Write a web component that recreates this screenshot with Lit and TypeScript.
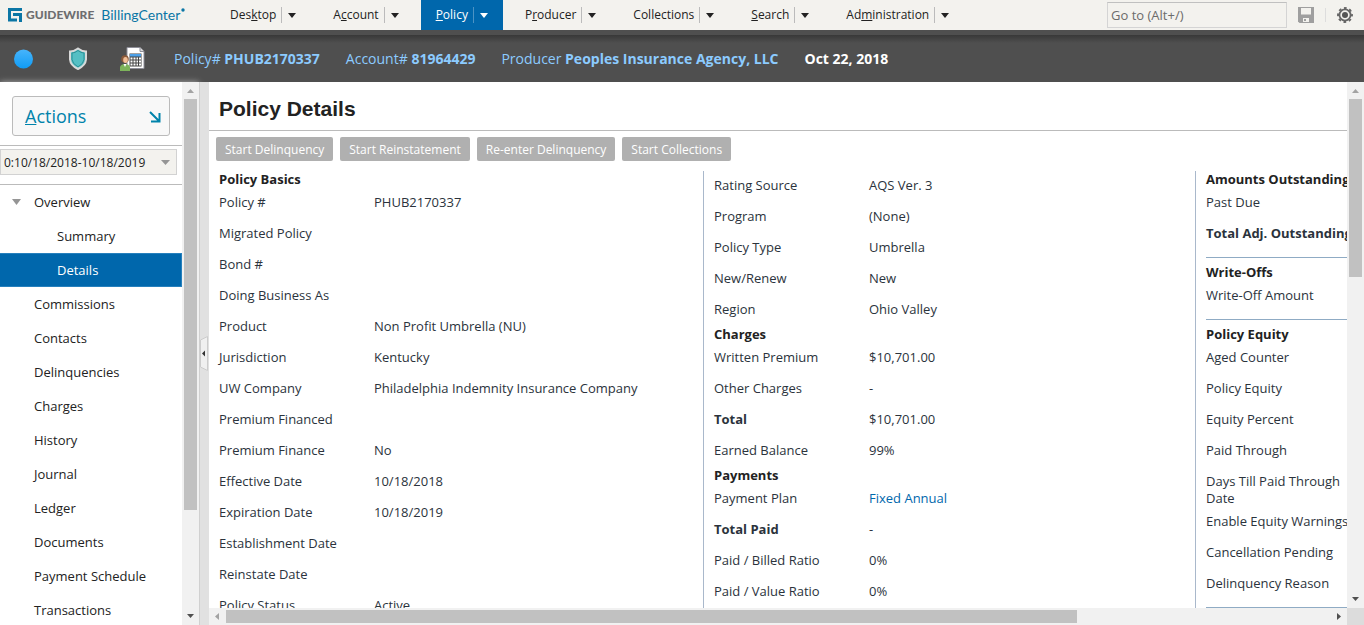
import { LitElement, html, css, nothing } from "lit";
import { customElement } from "lit/decorators.js";
import { classMap } from "lit/directives/class-map.js";

type Row = { label: string; value?: string; strong?: boolean; link?: boolean };
type Group = { title?: string; rows: Row[]; ruled?: boolean };

const MENUS: { pre: string; key: string; post: string; active?: boolean }[] = [
  { pre: "Des", key: "k", post: "top" },
  { pre: "A", key: "c", post: "count" },
  { pre: "", key: "P", post: "olicy", active: true },
  { pre: "P", key: "r", post: "oducer" },
  { pre: "Collections", key: "", post: "" },
  { pre: "", key: "S", post: "earch" },
  { pre: "Ad", key: "m", post: "inistration" },
];

const COLUMNS: Group[][] = [
  [
    {
      title: "Policy Basics",
      rows: [
        { label: "Policy #", value: "PHUB2170337" },
        { label: "Migrated Policy" },
        { label: "Bond #" },
        { label: "Doing Business As" },
        { label: "Product", value: "Non Profit Umbrella (NU)" },
        { label: "Jurisdiction", value: "Kentucky" },
        { label: "UW Company", value: "Philadelphia Indemnity Insurance Company" },
        { label: "Premium Financed" },
        { label: "Premium Finance", value: "No" },
        { label: "Effective Date", value: "10/18/2018" },
        { label: "Expiration Date", value: "10/18/2019" },
        { label: "Establishment Date" },
        { label: "Reinstate Date" },
        { label: "Policy Status", value: "Active" },
      ],
    },
  ],
  [
    {
      rows: [
        { label: "Rating Source", value: "AQS Ver. 3" },
        { label: "Program", value: "(None)" },
        { label: "Policy Type", value: "Umbrella" },
        { label: "New/Renew", value: "New" },
        { label: "Region", value: "Ohio Valley" },
      ],
    },
    {
      title: "Charges",
      rows: [
        { label: "Written Premium", value: "$10,701.00" },
        { label: "Other Charges", value: "-" },
        { label: "Total", value: "$10,701.00", strong: true },
        { label: "Earned Balance", value: "99%" },
      ],
    },
    {
      title: "Payments",
      rows: [
        { label: "Payment Plan", value: "Fixed Annual", link: true },
        { label: "Total Paid", value: "-", strong: true },
        { label: "Paid / Billed Ratio", value: "0%" },
        { label: "Paid / Value Ratio", value: "0%" },
      ],
    },
  ],
  [
    {
      title: "Amounts Outstanding",
      ruled: true,
      rows: [{ label: "Past Due" }, { label: "Total Adj. Outstanding", strong: true }],
    },
    { title: "Write-Offs", ruled: true, rows: [{ label: "Write-Off Amount" }] },
    {
      title: "Policy Equity",
      ruled: true,
      rows: [
        { label: "Aged Counter" },
        { label: "Policy Equity" },
        { label: "Equity Percent" },
        { label: "Paid Through" },
        { label: "Days Till Paid Through Date" },
        { label: "Enable Equity Warnings" },
        { label: "Cancellation Pending" },
        { label: "Delinquency Reason" },
      ],
    },
  ],
];

@customElement("gw-scrollbar")
class GwScrollbar extends LitElement {
  static properties = {
    horizontal: { type: Boolean, reflect: true },
    before: { type: Number },
    size: { type: Number },
    after: { type: Number },
  };
  declare horizontal: boolean;
  declare before: number;
  declare size: number;
  declare after: number;

  static styles = css`
    :host { display: flex; flex-direction: column; flex: none; width: 17px; background: #f1f1f1; }
    :host([horizontal]) { flex-direction: row; width: auto; height: 17px; }
    .arrow { flex: none; width: 17px; height: 17px; display: block; }
    .track { flex: 1; min-width: 0; min-height: 0; display: flex; flex-direction: column; align-items: center; }
    :host([horizontal]) .track { flex-direction: row; }
    .thumb { background: #c1c1c1; width: 13px; }
    :host([horizontal]) .thumb { width: auto; height: 13px; }
  `;

  render() {
    const h = this.horizontal;
    return html`
      <svg class="arrow" viewBox="0 0 17 17"><path fill="#a3a3a3" d=${h ? "M10 5v7L6 8.500z" : "M5 11h7L8.500 7z"} /></svg>
      <div class="track">
        <div style="flex:${this.before} 0 0"></div>
        <div class="thumb" style="flex:${this.size} 0 0"></div>
        <div style="flex:${this.after} 0 0"></div>
      </div>
      <svg class="arrow" viewBox="0 0 17 17"><path fill="#505050" d=${h ? "M7 5v7l4-3.500z" : "M5 6h7l-3.500 4z"} /></svg>
    `;
  }
}

@customElement("gw-topbar")
class GwTopbar extends LitElement {
  static styles = css`
    :host { display: flex; align-items: stretch; flex: none; height: 30px; background: #f3f2ee; color: #222; }
    .brand { display: flex; align-items: center; flex: none; width: 207px; padding-left: 8px; box-sizing: border-box; }
    .mark { width: 14px; height: 14px; flex: none; margin-right: 4px; }
    .maker { font: 900 12px/16px Lato, sans-serif; color: #6d6e70; }
    .product { font: 14px/18px Lato, "Open Sans", sans-serif; color: #0b76a5; margin-left: 7px; }
    .reg { width: 4px; height: 4px; align-self: flex-start; margin: 8px 0 0 1px; }
    nav { display: flex; gap: 7px; flex: 1; padding-left: 8px; }
    .menu {
      display: flex; align-items: center; border: 0; background: none; padding: 0 15px;
      font: inherit; font-size: 12px; line-height: 16px; color: inherit; white-space: nowrap;
    }
    .menu.active { background: #0067ac; color: #fff; }
    .sep { width: 1px; height: 16px; background: #bbb; margin: 0 6px 0 5px; }
    .active .sep { background: #4c93c4; }
    .caret { width: 8px; height: 5px; }
    .search {
      width: 180px; height: 26px; box-sizing: border-box; align-self: center; border: 1px solid #d4d4d4; border-top-color: #c0c0c0;
      background: #f3f2ee; padding: 0 3px; font: inherit; font-size: 13px; color: #555;
    }
    .search::placeholder { color: #6b6b6b; opacity: 1; }
    .tools { display: flex; align-items: center; padding: 0 11px; }
    .tool { border: 0; padding: 0; background: none; display: block; width: 16px; height: 16px; }
    .tool svg { display: block; width: 16px; height: 16px; }
    .line { width: 1px; height: 14px; background: #ddd; margin: 0 11px; }
  `;

  render() {
    return html`
      <div class="brand">
        <svg class="mark" viewBox="0 0 14 14">
          <path d="M14 1.500H1.500V12H9" fill="none" stroke="#0b76a5" stroke-width="3" />
          <path d="M5 6.500H12.500V14" fill="none" stroke="#0b76a5" stroke-width="3" />
        </svg>
        <span class="maker">GUIDEWIRE</span><span class="product">BillingCenter</span>
        <svg class="reg" viewBox="0 0 4 4"><circle cx="2" cy="2" r="1.700" fill="#0b76a5" /></svg>
      </div>
      <nav>
        ${MENUS.map(
          (m) => html`<button class=${classMap({ menu: true, active: !!m.active })}>
            <span>${m.pre}${m.key ? html`<u>${m.key}</u>` : nothing}${m.post}</span>
            <span class="sep"></span>
            <svg class="caret" viewBox="0 0 8 5"><path d="M0 0h8L4 5z" fill="currentColor" /></svg>
          </button>`,
        )}
      </nav>
      <input class="search" aria-label="Go to" placeholder="Go to (Alt+/)" />
      <div class="tools">
        <button class="tool" aria-label="Save">
          <svg viewBox="0 0 16 16">
            <path d="M0 0h16v16H1.500L0 14.500z" fill="#9f9f9f" />
            <path d="M3 1h10v6.500H3zM5 11h6v4H5z" fill="#f3f2ee" />
            <path d="M6 12h2v2H6z" fill="#9f9f9f" />
          </svg>
        </button>
        <span class="line"></span>
        <button class="tool" aria-label="Settings">
          <svg viewBox="0 0 16 16" fill="none" stroke="#666">
            <circle cx="8" cy="8" r="5.600" stroke-width="1.800" />
            <circle cx="8" cy="8" r="7" stroke-width="1.900" stroke-dasharray="2.750 2.750" stroke-dashoffset="1.300" />
            <circle cx="8" cy="8" r="3" fill="#555" stroke="none" />
          </svg>
        </button>
      </div>
    `;
  }
}

@customElement("gw-infobar")
class GwInfobar extends LitElement {
  static styles = css`
    :host {
      display: flex; align-items: center; flex: none; height: 52px; box-sizing: border-box; border-top: 5px solid #4f4f4f;
      background: linear-gradient(#383838, #4f4f4f 8px); color: #fff; font-size: 14px; line-height: 20px; white-space: nowrap;
    }
    .icons { display: flex; align-items: center; width: 174px; flex: none; padding-left: 13px; box-sizing: border-box; }
    .dot { width: 20px; height: 20px; margin-right: 35px; }
    .shield { width: 20px; height: 24px; margin-right: 32px; }
    .acct { width: 25px; height: 24px; }
    .facts { display: flex; gap: 26px; }
    a { color: #8ccbff; text-decoration: none; }
  `;

  render() {
    return html`
      <div class="icons">
        <svg class="dot" viewBox="0 0 20 20">
          <defs><linearGradient id="b" x2="0" y2="1"><stop stop-color="#47b4fb" /><stop offset="1" stop-color="#109cf5" /></linearGradient></defs>
          <circle cx="10.500" cy="10" r="9.500" fill="url(#b)" />
        </svg>
        <svg class="shield" viewBox="0 0 20 24">
          <path d="M10 1.500Q6 4.500 2 4.500v8Q2.500 18.500 10 22 17.500 18.500 18 12.500v-8Q14 4.500 10 1.500z" fill="#55bfc4" stroke="#d9d9d9" stroke-width="2" />
          <path d="M10 3.500Q7 6 4 6v6.500Q4.500 17 10 19.800 15.500 17 16 12.500V6Q13 6 10 3.500z" fill="none" stroke="#2f9097" stroke-width="1" />
        </svg>
        <svg class="acct" viewBox="0 0 25 24">
          <path d="M7 .500h13l4 4v17H7z" fill="#fff" stroke="#8e8e98" />
          <path d="M20 .500v4h4" fill="#ddd" stroke="#8e8e98" />
          <path d="M9.500 6.500h12v13h-12z" fill="#444" />
          <path d="M10 7h11v2.500H10z" fill="#4da0e8" />
          <path d="M10.500 10.500h2v2h-2zM13.500 10.500h2v2h-2zM16.500 10.500h1.500v2h-1.500zM19 10.500h2v2h-2zM10.500 13.500h2v2h-2zM13.500 13.500h2v2h-2zM16.500 13.500h1.500v2h-1.500zM19 13.500h2v2h-2zM10.500 16.500h2v2h-2zM13.500 16.500h2v2h-2zM16.500 16.500h1.500v2h-1.500zM19 16.500h2v2h-2z" fill="#fff" />
          <circle cx="5" cy="12" r="3.800" fill="#8b5a3a" />
          <ellipse cx="5.500" cy="13" rx="2.300" ry="3" fill="#f0bd96" />
          <path d="M0 24v-4q1-3 5-3t5 3v4z" fill="#7db35b" />
          <path d="M3.500 17l1.500 3 1.500-3z" fill="#fff" />
        </svg>
      </div>
      <div class="facts">
        <a href="#policy">Policy# <b>PHUB2170337</b></a>
        <a href="#account">Account# <b>81964429</b></a>
        <a href="#producer">Producer <b>Peoples Insurance Agency, LLC</b></a>
        <b>Oct 22, 2018</b>
      </div>
    `;
  }
}

@customElement("gw-sidebar")
class GwSidebar extends LitElement {
  static styles = css`
    :host { display: flex; flex: none; width: 199px; min-height: 0; color: #222; background: #fff; box-shadow: 0 0 6px #aaa; }
    .panel { flex: 1; min-width: 0; overflow: hidden; }
    .actions {
      display: flex; justify-content: space-between; align-items: center; width: 158px; height: 40px; box-sizing: border-box;
      margin: 14px 12px 9px; padding: 0 8px 0 12px; border: 1px solid #bbb; border-radius: 3px; background: #f8f8f8;
      font: inherit; font-size: 18px; line-height: 24px; color: #0083ab;
    }
    .actions svg { width: 12px; height: 12px; margin-top: 2px; }
    .term { display: block; position: relative; border: solid #bbb; border-width: 1px 0; padding: 3px 0 9px; }
    select {
      appearance: none; display: block; width: 177px; height: 26px; box-sizing: border-box; border: 1px solid #d2d2d2; border-radius: 0;
      background: #f3f2ee; padding: 0 0 0 3px; font: inherit; font-size: 12px; color: #222;
    }
    .term svg { position: absolute; left: 161px; top: 14px; width: 9px; height: 5px; }
    ul { list-style: none; margin: 0; padding: 0; }
    a {
      display: flex; align-items: center; height: 34px; box-sizing: border-box; padding-left: 34px; color: inherit;
      text-decoration: none; font-size: 13px; line-height: 17px;
    }
    .top { padding-left: 12px; }
    .top svg { width: 9px; height: 6px; margin-right: 13px; }
    .sub { padding-left: 57px; }
    .on { background: #0067ac; color: #fff; border: 1px solid #2680bd; border-left: 0; }
  `;

  render() {
    const items = ["Commissions", "Contacts", "Delinquencies", "Charges", "History", "Journal", "Ledger", "Documents", "Payment Schedule", "Transactions"];
    return html`
      <div class="panel">
        <button class="actions">
          <span><u>A</u>ctions</span>
          <svg viewBox="0 0 12 12" fill="none" stroke="#0083ab" stroke-width="2"><path d="M1 1l9 9M2 10.500h8.500V2" /></svg>
        </button>
        <label class="term">
          <select aria-label="Policy term"><option>0:10/18/2018-10/18/2019</option></select>
          <svg viewBox="0 0 9 5"><path d="M0 0h9L4.500 5z" fill="#959595" /></svg>
        </label>
        <ul>
          <li><a class="top" href="#overview"><svg viewBox="0 0 9 6"><path d="M0 0h9L4.500 6z" fill="#959595" /></svg>Overview</a></li>
          <li><a class="sub" href="#summary">Summary</a></li>
          <li><a class="sub on" href="#details">Details</a></li>
          ${items.map((i) => html`<li><a href="#${i.toLowerCase().replace(" ", "-")}">${i}</a></li>`)}
        </ul>
      </div>
      <gw-scrollbar .before=${0} .size=${411} .after=${98}></gw-scrollbar>
    `;
  }
}

@customElement("gw-details")
class GwDetails extends LitElement {
  static styles = css`
    :host { display: grid; flex: 1; min-width: 0; min-height: 0; grid-template: minmax(0, 1fr) 17px / minmax(0, 1fr) 17px; color: #2b333c; }
    .page { overflow: hidden; }
    h1 { margin: 0; padding: 14px 10px 8px; font: bold 21px/26px "Liberation Sans", Arial, sans-serif; color: #222; border-bottom: 1px solid #bbb; }
    .bar { display: flex; gap: 7px; padding: 6px 7px 10px; }
    .bar button {
      height: 24px; border: 0; border-radius: 2px; background: #b0b0b0; color: #fff; padding: 0 9px;
      font: inherit; font-size: 12px; white-space: nowrap;
    }
    .cols { display: flex; padding-left: 10px; font-size: 13px; line-height: 17px; }
    .col { flex: none; width: 484px; }
    .col + .col { border-left: 1px solid #a9b8cb; padding-left: 10px; width: 481px; }
    h2 { margin: 0; font-size: 13px; line-height: 17px; color: #222; white-space: nowrap; }
    dl { margin: 0; }
    .row { display: grid; grid-template-columns: 145px 1fr; column-gap: 10px; min-height: 31px; box-sizing: border-box; padding-top: 6px; }
    dt, dd { margin: 0; }
    .strong dt { font-weight: bold; white-space: nowrap; }
    a { color: #0067ac; text-decoration: none; }
    .rule { border: 0; border-top: 1px solid #8fabc4; margin: 7px 0 6px; }
    .corner { background: #dcdcdc; }
  `;

  render() {
    return html`
      <div class="page">
        <h1>Policy Details</h1>
        <div class="bar">
          <button>Start Delinquency</button><button>Start Reinstatement</button><button>Re-enter Delinquency</button><button>Start Collections</button>
        </div>
        <div class="cols">
          ${COLUMNS.map(
            (groups) => html`<section class="col">
              ${groups.map(
                (g) => html`
                  ${g.title ? html`<h2>${g.title}</h2>` : nothing}
                  <dl>
                    ${g.rows.map(
                      (r) => html`<div class=${classMap({ row: true, strong: !!r.strong })}>
                        <dt>${r.label}</dt>
                        <dd>${r.link ? html`<a href="#plan">${r.value}</a>` : r.value}</dd>
                      </div>`,
                    )}
                  </dl>
                  ${g.ruled ? html`<hr class="rule" />` : nothing}
                `,
              )}
            </section>`,
          )}
        </div>
      </div>
      <gw-scrollbar .before=${0} .size=${178} .after=${314}></gw-scrollbar>
      <gw-scrollbar horizontal .before=${0} .size=${851} .after=${253}></gw-scrollbar>
      <div class="corner"></div>
    `;
  }
}

@customElement("app-root")
class AppRoot extends LitElement {
  static styles = css`
    :host { display: flex; flex-direction: column; height: 100vh; background: #fff; font-family: "Open Sans", sans-serif; overflow: hidden; }
    main { display: flex; flex: 1; min-height: 0; }
    .splitter { display: flex; align-items: center; flex: none; width: 10px; box-sizing: border-box; border-left: 1px solid #d0d0d0; background: #e1e1e1; }
    .collapse { border: 0; padding: 0; background: none; width: 8px; height: 35px; }
    .collapse svg { display: block; width: 8px; height: 35px; }
  `;

  render() {
    return html`
      <gw-topbar></gw-topbar>
      <gw-infobar></gw-infobar>
      <main>
        <gw-sidebar></gw-sidebar>
        <div class="splitter">
          <button class="collapse" aria-label="Collapse sidebar">
            <svg viewBox="0 0 8 35">
              <path d="M7.500 .500L.500 4v27l7 3.500z" fill="#f0f0f0" stroke="#ccc" />
              <path d="M5 14.500v6L2 17.500z" fill="#333" />
            </svg>
          </button>
        </div>
        <gw-details></gw-details>
      </main>
    `;
  }
}
